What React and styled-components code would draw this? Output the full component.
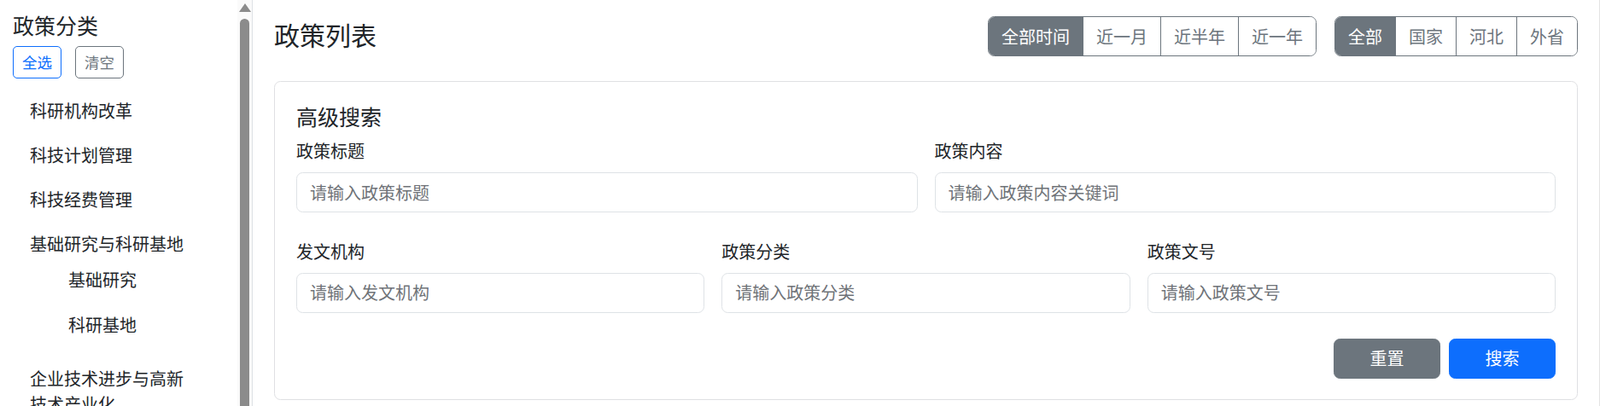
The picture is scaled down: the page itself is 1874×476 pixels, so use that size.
import React from 'react';
import styled, { createGlobalStyle } from 'styled-components';

const GlobalStyle = createGlobalStyle`
  html, body {
    margin: 0;
    padding: 0;
    height: 476px;
    overflow: hidden;
    background: #ffffff;
  }
  body {
    font-family: "Noto Sans CJK SC", "Noto Sans", sans-serif;
    color: #212529;
    font-size: 20px;
    line-height: 1.5;
  }
  * { box-sizing: border-box; }
`;

const Layout = styled.div`
  display: flex;
  align-items: stretch;
  width: 1874px;
  height: 476px;
`;

const Sidebar = styled.aside`
  flex: 0 0 296px;
  width: 296px;
  height: 476px;
  display: flex;
  overflow: hidden;
  border-right: 1px solid #dee2e6;
`;

const SideContent = styled.div`
  flex: 1;
  min-width: 0;
  padding: 14px 0 8px 15px;
`;

const ScrollRail = styled.div`
  flex: 0 0 17px;
  display: flex;
  flex-direction: column;
  align-items: center;
  background: #fafafa;
  padding-top: 4px;
`;

const ScrollArrow = styled.div`
  width: 0;
  height: 0;
  border-left: 7px solid transparent;
  border-right: 7px solid transparent;
  border-bottom: 10px solid #8b8b8b;
`;

const ScrollThumb = styled.div`
  flex: 1;
  width: 11px;
  margin-top: 8px;
  background: #8b8b8b;
  border-radius: 6px 6px 0 0;
`;

const SideTitle = styled.h5`
  margin: 0 0 10px;
  font-size: 25px;
  font-weight: 400;
  line-height: 30px;
`;

const ButtonRow = styled.div`
  display: flex;
  gap: 16px;
`;

const SmallButton = styled.button`
  font-family: inherit;
  font-size: 17.5px;
  line-height: 26px;
  padding: 5px 10px;
  border-radius: 5px;
  background: #ffffff;
  border: 1px solid ${p => (p.$variant === 'primary' ? '#0d6efd' : '#6c757d')};
  color: ${p => (p.$variant === 'primary' ? '#0d6efd' : '#6c757d')};
  cursor: pointer;
`;

const CategoryList = styled.ul`
  list-style: none;
  margin: 12px 0 0;
  padding: 0 53px 0 20px;
`;

const CategoryItem = styled.li`
  padding: 11px 0;
  font-size: 20px;
  line-height: 30px;
`;

const SubList = styled.ul`
  list-style: none;
  margin: 0;
  padding: 0 0 0 45px;
`;

const SubItem = styled.li`
  padding: 11.5px 0;
  font-size: 20px;
  line-height: 30px;
`;

const Main = styled.main`
  flex: 1;
  min-width: 0;
  padding: 19px 25px 0;
  border-right: 1px solid #e3e3e3;
`;

const Header = styled.div`
  display: flex;
  align-items: flex-start;
  justify-content: space-between;
`;

const PageTitle = styled.h4`
  margin: 3px 0 0;
  font-size: 30px;
  font-weight: 400;
  line-height: 36px;
`;

const Filters = styled.div`
  display: flex;
  gap: 21px;
`;

const Group = styled.div`
  display: flex;
  border: 1px solid #6c757d;
  border-radius: 7.5px;
  overflow: hidden;
`;

const GroupButton = styled.button`
  font-family: inherit;
  font-size: 20px;
  line-height: 30px;
  padding: 7.5px 15px;
  border: none;
  border-left: 1px solid #6c757d;
  background: ${p => (p.$active ? '#6c757d' : '#ffffff')};
  color: ${p => (p.$active ? '#ffffff' : '#6c757d')};
  cursor: pointer;
  &:first-child { border-left: none; }
`;

const Card = styled.section`
  margin-top: 29px;
  border: 1px solid #dfe0e3;
  border-radius: 7.5px;
  padding: 25px 25px 24px;
`;

const CardTitle = styled.h5`
  margin: 0 0 11px;
  font-size: 25px;
  font-weight: 400;
  line-height: 30px;
`;

const FieldRow = styled.div`
  display: grid;
  grid-template-columns: repeat(${p => p.$cols}, 1fr);
  gap: 20px;
  margin-bottom: ${p => p.$gapAfter}px;
`;

const Field = styled.div`
  display: flex;
  flex-direction: column;
`;

const Label = styled.label`
  font-size: 20px;
  line-height: 30px;
  margin-bottom: 10px;
`;

const Input = styled.input`
  font-family: inherit;
  font-size: 20px;
  line-height: 30px;
  padding: 7.5px 15px;
  border: 1px solid #dee2e6;
  border-radius: 7.5px;
  color: #212529;
  outline: none;
  &::placeholder { color: #6f7378; }
`;

const Actions = styled.div`
  display: flex;
  justify-content: flex-end;
  gap: 10px;
`;

const ActionButton = styled.button`
  width: 125px;
  font-family: inherit;
  font-size: 20px;
  line-height: 30px;
  padding: 7.5px 0;
  border-radius: 7.5px;
  border: 1px solid ${p => (p.$variant === 'primary' ? '#0d6efd' : '#6c757d')};
  background: ${p => (p.$variant === 'primary' ? '#0d6efd' : '#6c757d')};
  color: #ffffff;
  cursor: pointer;
`;

const categories = [
  { name: '科研机构改革' },
  { name: '科技计划管理' },
  { name: '科技经费管理' },
  { name: '基础研究与科研基地', children: ['基础研究', '科研基地'] },
  { name: '企业技术进步与高新技术产业化' },
  { name: '农村科技与社会发展' },
  { name: '科技成果转化' },
];

const timeFilters = ['全部时间', '近一月', '近半年', '近一年'];
const regionFilters = ['全部', '国家', '河北', '外省'];

export default function App() {
  return (
    <>
      <GlobalStyle />
      <Layout>
        <Sidebar>
          <SideContent>
            <SideTitle>政策分类</SideTitle>
            <ButtonRow>
              <SmallButton $variant="primary">全选</SmallButton>
              <SmallButton>清空</SmallButton>
            </ButtonRow>
            <CategoryList>
              {categories.map(c => (
                <CategoryItem key={c.name}>
                  {c.name}
                  {c.children && (
                    <SubList>
                      {c.children.map(s => (
                        <SubItem key={s}>{s}</SubItem>
                      ))}
                    </SubList>
                  )}
                </CategoryItem>
              ))}
            </CategoryList>
          </SideContent>
          <ScrollRail>
            <ScrollArrow />
            <ScrollThumb />
          </ScrollRail>
        </Sidebar>
        <Main>
          <Header>
            <PageTitle>政策列表</PageTitle>
            <Filters>
              <Group>
                {timeFilters.map((t, i) => (
                  <GroupButton key={t} $active={i === 0}>{t}</GroupButton>
                ))}
              </Group>
              <Group>
                {regionFilters.map((t, i) => (
                  <GroupButton key={t} $active={i === 0}>{t}</GroupButton>
                ))}
              </Group>
            </Filters>
          </Header>
          <Card>
            <CardTitle>高级搜索</CardTitle>
            <FieldRow $cols={2} $gapAfter={30.5}>
              <Field>
                <Label>政策标题</Label>
                <Input placeholder="请输入政策标题" />
              </Field>
              <Field>
                <Label>政策内容</Label>
                <Input placeholder="请输入政策内容关键词" />
              </Field>
            </FieldRow>
            <FieldRow $cols={3} $gapAfter={30}>
              <Field>
                <Label>发文机构</Label>
                <Input placeholder="请输入发文机构" />
              </Field>
              <Field>
                <Label>政策分类</Label>
                <Input placeholder="请输入政策分类" />
              </Field>
              <Field>
                <Label>政策文号</Label>
                <Input placeholder="请输入政策文号" />
              </Field>
            </FieldRow>
            <Actions>
              <ActionButton>重置</ActionButton>
              <ActionButton $variant="primary">搜索</ActionButton>
            </Actions>
          </Card>
        </Main>
      </Layout>
    </>
  );
}
